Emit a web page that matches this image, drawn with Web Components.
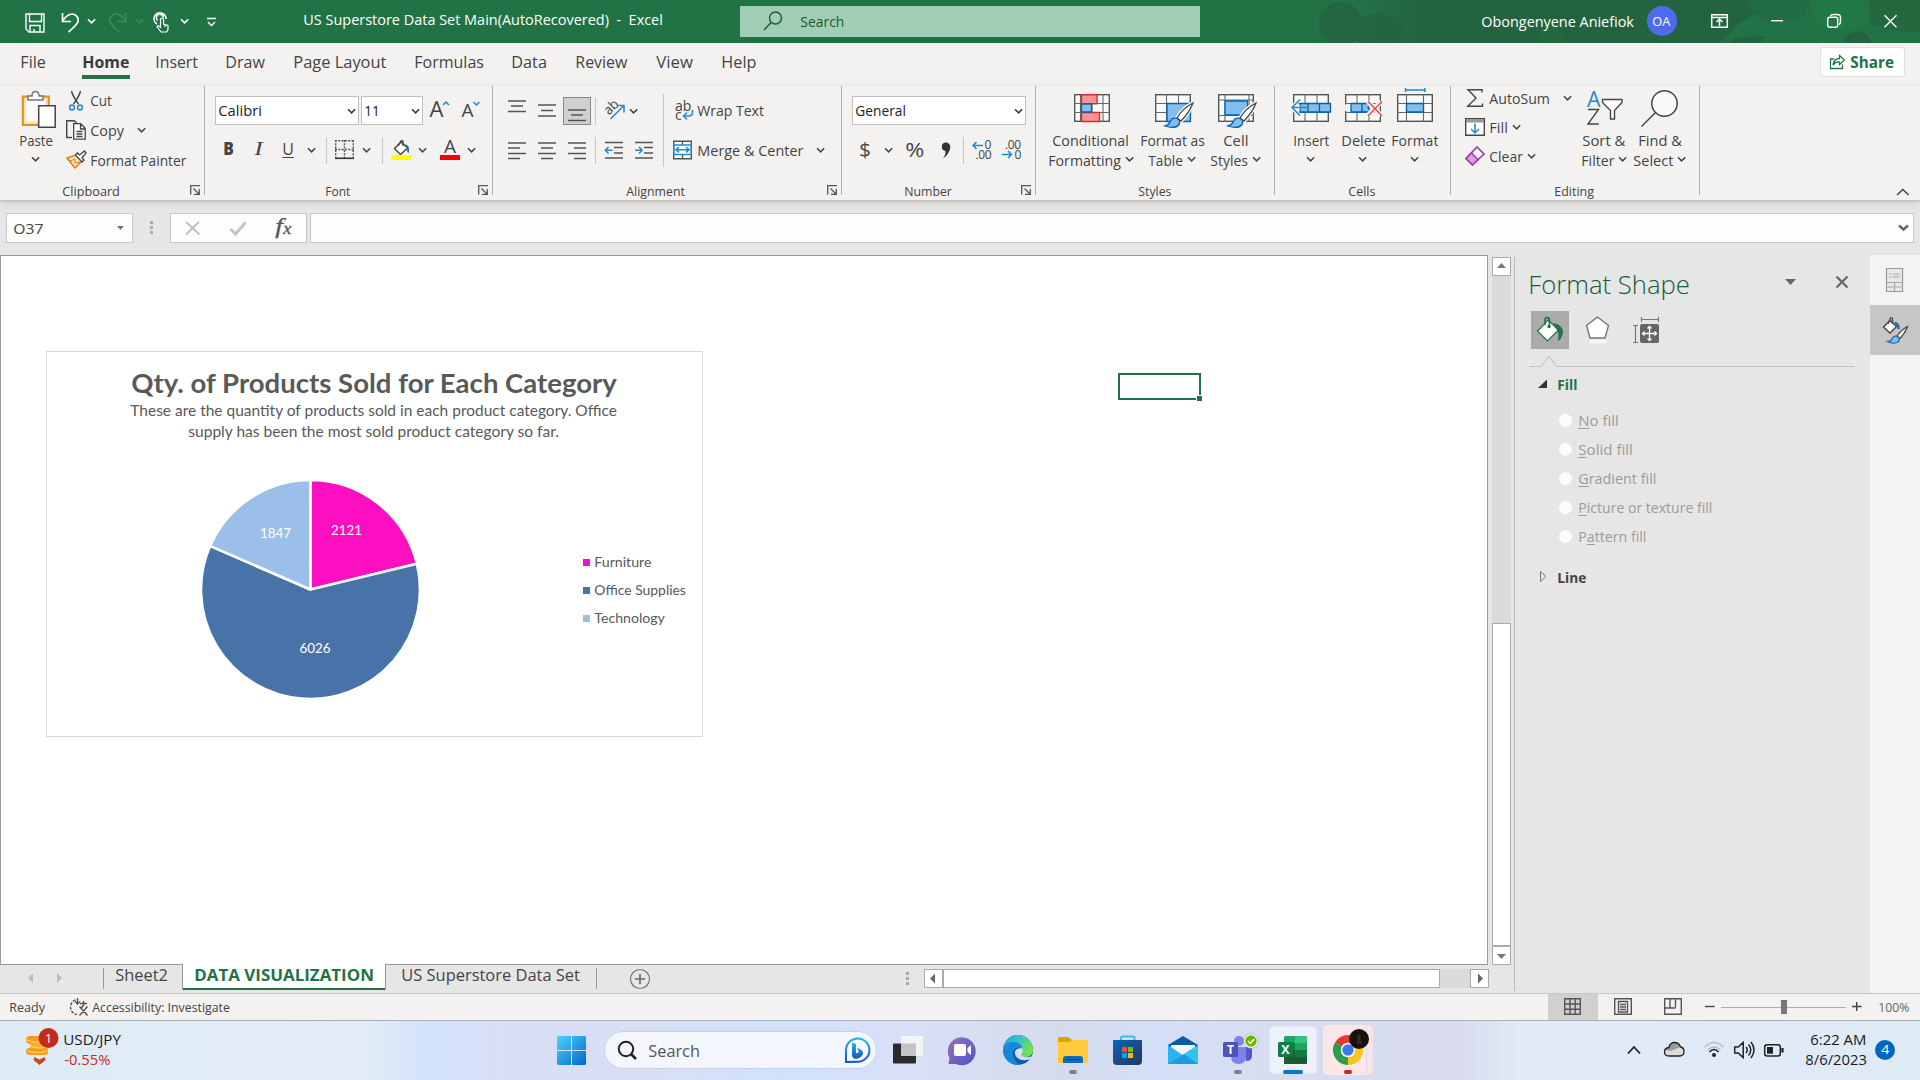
<!DOCTYPE html>
<html lang="en">
<head>
<meta charset="utf-8">
<title>US Superstore Data Set Main - Excel</title>
<style>
html,body{margin:0;padding:0;width:1920px;height:1080px;overflow:hidden;background:#e6e6e6;font-family:"Open Sans","Noto Sans",sans-serif}
</style>
</head>
<body>
<excel-desktop></excel-desktop>
<script>
/* ---------- flow layout helpers: nested flex boxes measured in page units ---------- */
const flow = (b) => {
  let cur = b.dir === 'v' ? b.y : b.x, out = '';
  for (const c of b.kids) {
    const ml = b.dir === 'v' ? c.x - b.x : c.x - cur;
    const mt = b.dir === 'v' ? c.y - cur : c.y - b.y;
    out += c.html(`margin:${+mt.toFixed(2)}px 0 0 ${+ml.toFixed(2)}px;width:${c.w}px;height:${c.h}px;`);
    cur = b.dir === 'v' ? c.y + c.h : c.x + c.w;
  }
  return out;
};
const box = (dir, x, y, w, h, kids, css = '') => {
  const b = { dir, x, y, w, h, kids };
  b.html = m => `<div class="${dir}" style="${m}${css}">${flow(b)}</div>`;
  return b;
};
const H = (...a) => box('h', ...a), V = (...a) => box('v', ...a);
const R = (x, y, w, h, css) => box('h', x, y, w, h, [], css);
const I = (x, y, w, h, inner) => ({ x, y, w, h, html: m => `<svg viewBox="${x} ${y} ${w} ${h}" style="${m}">${inner}</svg>` });
const T = (x, cy, w, text, s = 14.5, css = '') => ({ x, y: cy - 10, w, h: 20, html: m => `<fit-text style="${m}font-size:${s}px;${css}">${text}</fit-text>` });
const C = (x, cy, col = '#444', k = 3.6) => I(x, cy - 4, k * 2 + 1, 8, `<path d="M${x} ${cy - 1.7}l${k} ${k}l${k} -${k}" fill="none" stroke="${col}" stroke-width="1.5"/>`);
const E = (tag, x, y, w, h, inner = '') => ({ x, y, w, h, html: m => `<${tag} style="${m}">${inner}</${tag}>` });

const BASE = `<style>
*{box-sizing:border-box}
:host{display:block;flex:none;box-sizing:border-box}
.h,.v{display:flex;flex:none}.h{align-items:flex-start}.v{flex-direction:column}
svg,fit-text{display:block;flex:none;overflow:visible}
svg text{font-family:"Open Sans","Noto Sans",sans-serif}
</style>`;
const define = (name, css, root) => customElements.define(name, class extends HTMLElement {
  connectedCallback() {
    if (this.shadowRoot) return;
    this.attachShadow({ mode: 'open' }).innerHTML = BASE + `<style>${css}</style>` + (typeof root === 'function' ? root(this) : root.html(''));
  }
});
const sized = (b) => b.html(`width:${b.w}px;height:${b.h}px;`);

/* Label that condenses its glyphs to the width of its box */
customElements.define('fit-text', class extends HTMLElement {
  connectedCallback() {
    if (this.shadowRoot) return;
    const r = this.attachShadow({ mode: 'open' });
    r.innerHTML = `<style>:host{display:block;flex:none;line-height:20px;white-space:pre}span{display:inline-block;transform-origin:0 50%}::slotted(u){text-underline-offset:2px;text-decoration-thickness:1px}</style><span><slot></slot></span>`;
    const s = r.querySelector('span');
    const n = s.getBoundingClientRect().width, w = parseFloat(this.style.width) + .6;
    if (n && w) s.style.transform = `translateX(-.7px) scaleX(${w / n})`;
  }
});

/* ---------- title bar ---------- */
const W = 'fill="none" stroke="#fff" stroke-width="1.4"';
define('title-bar', ':host{position:relative;background:#217346;color:#fff;overflow:hidden}.bg{position:absolute;left:0;top:0}.h{position:relative}', () =>
`<svg class="bg" width="1920" height="43" viewBox="0 0 1920 43"><defs><linearGradient id="g"><stop offset="0" stop-color="#24633f" stop-opacity="0"/><stop offset=".3" stop-color="#24633f"/></linearGradient></defs>
<circle cx="1341" cy="24" r="22" fill="#246640"/><ellipse cx="1378" cy="31" rx="26" ry="17" fill="#246640"/>
<rect x="1360" width="200" height="43" fill="url(#g)"/><path d="M1432 43Q1428 20 1450 0H1765Q1758 12 1745 20Q1730 30 1720 43Z" fill="#24633f"/>
<path d="M1538 43q2-20 14-20q8 4 15 20z" fill="#23693f"/><path d="M1735 38q20-2 29-2q2 3-4 7h-30z" fill="#24633f"/>
<path d="M1765 0h-18q8 22 30 22q18-1 28-6l5-16z" fill="#226c43"/><path d="M1811 0q-2 12 7 22q14 10 34 8q18-3 17-20l-5-10z" fill="#217847"/><ellipse cx="1857" cy="44" rx="14" ry="12" fill="#24633f"/><path d="M1870 24q25 10 50 8v-32h-50z" fill="#23683f"/></svg>` +
sized(H(0, 0, 1920, 43, [
  I(25, 13, 20, 20, `<path d="M26 14h18v18h-15l-3-3zM29.5 14v7.5h12V14M30 32v-6.500h10V32M34 32v-3" ${W}/>`),
  I(60, 12, 20, 22, `<path d="M62.500 13v8.500h8.500M62.500 21C68 13 74 12.500 77 16.500C80 21 78 24 68.500 32" ${W} style="stroke-width:1.700"/>`),
  C(88, 21, '#fff'),
  I(108, 12, 20, 22, `<path d="M126 13v8.500h-8.500M126 21C120 13 114 12.500 111 16.500C108 21 110 24 119.500 32" ${W} style="stroke:#3f8b61"/>`),
  C(136, 21, '#3f8b61'),
  I(153, 12, 17, 22, `<path d="M157 24a6 6 0 1 1 9-5M157.500 20.500a3.600 3.600 0 1 1 6-3" ${W} style="stroke-width:1.600"/><path d="M160.500 28v-9q1.500-2 3 0v5l4.500 1.500v4q-1 2-1.500 2.500h-5.500l-4-5.500q1-1.500 3.500.5M165 24v3" ${W} style="stroke-width:1.200"/>`),
  C(181, 21, '#fff'),
  I(207, 16, 10, 11, `<path d="M207 18.500h9M208 22l3.500 3.500l3.500-3.500" ${W}/>`),
  T(304.500, 19.500, 359, 'US Superstore Data Set Main(AutoRecovered)  -  Excel', 14.5),
  H(740, 6, 460, 31, [
    I(763, 11, 20, 20, `<circle cx="775.500" cy="18" r="6" fill="none" stroke="#185c37" stroke-width="1.400"/><path d="M771 22.500L764 30" stroke="#185c37" stroke-width="1.500"/>`),
    T(801.500, 21.500, 43.500, 'Search', 14.5, 'color:#185c37')], 'background:#a0cdb4'),
  T(1482.500, 21.500, 152, 'Obongenyene Aniefiok'),
  H(1647, 6, 30, 30, [T(1653.500, 21, 17.500, 'OA', 13)], 'background:#4f6bed;border-radius:50%'),
  I(1711, 14, 17, 14, `<path d="M1711.700 14.700h15.600v12.600h-15.600zM1711 17.500h17M1719.500 26v-6M1716.500 22l3-3l3 3" ${W} style="stroke-width:1.500"/>`),
  I(1771, 20, 12, 2, `<path d="M1771 20.700h12" ${W}/>`),
  I(1827, 14, 14, 14, `<rect x="1827.700" y="17.200" width="10" height="10" rx="2" ${W}/><path d="M1830.500 16q.5-1.500 3-1.500h3.500q3.500 0 3.500 3v4q0 2.500-1.500 3" ${W}/>`),
  I(1884, 15, 13, 13, `<path d="M1884.500 15.300l12 12M1896.500 15.300l-12 12" ${W}/>`)
])));

/* ---------- tabs ---------- */
define('ribbon-tabs', ':host{background:#f3f2f1;color:#444}', () => sized(H(0, 43, 1920, 43, [
  T(21, 62, 25, 'File', 16),
  V(82, 52, 48, 27, [T(82.500, 62, 46.500, 'Home', 16, 'font-weight:700;color:#3b3a39'), R(82, 75, 48, 4, 'background:#217346')]),
  ...[[156, 42, 'Insert'], [226, 39, 'Draw'], [294, 92.500, 'Page Layout'], [415, 69, 'Formulas'], [512, 35, 'Data'], [576, 51.500, 'Review'], [657, 36, 'View'], [721.500, 34.500, 'Help']].map(a => T(a[0], 62, a[1], a[2], 16)),
  H(1820, 47, 85, 30, [
    I(1829, 53, 16, 17, `<path d="M1834 59h-3.500v9.500h12v-4M1833 65q1-6.500 6.500-6.500v-3l5 4.500l-5 4.500v-2.500q-4-.500-6.500 3z" fill="none" stroke="#217346" stroke-width="1.300"/>`),
    T(1850.500, 62, 43, 'Share', 16, 'font-weight:700;color:#217346')], 'background:#fff;border-radius:3px;box-shadow:inset 0 0 0 1px #e1dfdd')
])));

/* ---------- ribbon ---------- */
const K = 'fill="none" stroke="#444" stroke-width="1.4"', B = 'fill="none" stroke="#1e8bcd" stroke-width="1.5"';
const launcher = x => I(x, 185, 10, 10, `<path d="M${x + .7} 194.500v-8.800h9.300M${x + 3.500} 188.500l5.500 5.500M${x + 9.300} 189v5.300h-5.300" fill="none" stroke="#555" stroke-width="1.300"/>`);
const vs = (x, y = 137, h = 27) => R(x, y, 1, h, 'background:#c8c6c4');
const lines = (x, ys, ws, al) => I(x, ys[0] - 1, 18, 19, ys.map((y, i) => { const d = al === 'l' ? 0 : al === 'r' ? 18 - ws[i] : (18 - ws[i]) / 2; return `<path d="M${x + d} ${y}h${ws[i]}" stroke="#555" stroke-width="1.500"/>`; }).join(''));
const combo = (x, w, tw, text) => H(x, 96, w, 29, [T(x + 4, 111, tw, text, 14.5, 'color:#222'), C(x + w - 11, 111, '#333')], 'background:#fff;box-shadow:inset 0 0 0 1px #c2c0be');
const grid = (x, y, w, h, cs, rs) => `<rect x="${x + .7}" y="${y + .7}" width="${w - 1.4}" height="${h - 1.4}" fill="#fafafa" stroke="#555" stroke-width="1.400"/>` + cs.map(c => `<path d="M${x + c} ${y}v${h}" stroke="#666" stroke-width="1.100"/>`).join('') + rs.map(r => `<path d="M${x} ${y + r}h${w}" stroke="#666" stroke-width="1.100"/>`).join('');
const brush = (x, y) => `<path d="M${x + 28} ${y}q-10 5-16 15l4 3q8-8 12-18z" fill="#fff" stroke="#f3f2f1" stroke-width="4"/><path d="M${x + 28} ${y}q-10 5-16 15l4 3q8-8 12-18z" fill="#fff" stroke="#444" stroke-width="1.300"/><path d="M${x} ${y + 23}q4-1 5-4q2-5 7-3.500q4 2 2 6q-4 5-14 1.500z" fill="#83beec" stroke="#0063b1" stroke-width="1.300"/>`;
const BL = 'fill="#83beec" stroke="#0063b1" stroke-width="1.300"';
const group = (x, w, kids, label) => V(x, 86, w, 109, [H(x, 86, w - 1, 90, kids), H(x, 178, w - 1, 17, label)], 'border-right:1px solid #b3b0ad');
const L = (x, w, t) => T(x, 191, w, t, 12.7);

define('ribbon-bar', ':host{background:#f3f2f1;color:#444;box-shadow:0 1px 2px #bbb8b5,0 3px 7px #d0cecc;position:relative}', () => sized(H(0, 86, 1920, 114, [
  group(0, 205, [
    V(14, 88, 46, 80, [
      I(21, 90, 36, 38, `<path d="M22.800 96.500h26v28.500h-26z" fill="#fbe0a0" stroke="#e08a28" stroke-width="2"/><path d="M26 99h19.500v22.500h-19.500z" fill="#fafafa"/><path d="M28 100v-4h4q0-4.500 3.500-4.500t3.500 4.500h4v4z" fill="#fff" stroke="#777" stroke-width="1.500"/><path d="M38.700 105.700h16.500v21.600h-16.500z" fill="#fff" stroke="#444" stroke-width="1.500"/>`),
      T(19.500, 140.500, 33, 'Paste'), C(31.500, 159)]),
    V(66, 88, 122, 84, [
      H(66, 88, 122, 24, [I(69, 91, 14, 19, `<path d="M71.500 91q1 5 7 13M80.500 91q-1 5-7 13" fill="none" stroke="#444" stroke-width="1.400"/><circle cx="72" cy="107.500" r="2.400" ${B}/><circle cx="80" cy="107.500" r="2.400" ${B}/>`), T(90.500, 100.500, 21, 'Cut')]),
      H(66, 118, 122, 24, [I(66, 120, 20, 20, `<path d="M72 137.500h-5.300v-16.800h7.500M77.500 124l-3.500-3.500" ${K}/><path d="M73.700 123.700h7l4.500 4.500v11h-11.500zM80.500 124v5h5M76.500 131.500h6M76.500 134h6M76.500 136.500h6" fill="#fff" stroke="#444" stroke-width="1.300"/>`), T(90.500, 130.500, 33, 'Copy'), C(137.500, 130)]),
      H(66, 148, 122, 24, [I(66, 150, 20, 19, `<path d="M67 158l9-3l6 6l-7 7z" fill="#fde3bb" stroke="#e07a12" stroke-width="1.500"/><path d="M70 161l5-2v4l5-1" fill="none" stroke="#e07a12"/><path d="M75.500 155l2-2l2 2l5-4l1.500 2l-4 5l2 2l-2 2z" fill="#fff" stroke="#444" stroke-width="1.300"/>`), T(90.500, 160.500, 95.500, 'Format Painter')])])
  ], [L(62.500, 57, 'Clipboard'), launcher(190)]),
  group(205, 288, [V(215, 90, 270, 80, [
    H(215, 93, 270, 36, [combo(215, 144, 43, 'Calibri'), combo(361, 62, 15, '11'),
      I(430, 97, 20, 22, `<text x="429.500" y="116.500" font-size="22" fill="#444" textLength="14" lengthAdjust="spacingAndGlyphs">A</text><path d="M443 105l3-3l3 3" ${B}/>`),
      I(462, 97, 20, 22, `<text x="461.500" y="116.500" font-size="18.500" fill="#444" textLength="12" lengthAdjust="spacingAndGlyphs">A</text><path d="M473.500 102l3 3l3-3" ${B}/>`)]),
    H(215, 134, 270, 32, [T(224, 149, 10, 'B', 17, 'font-weight:800'), T(255, 149, 8, 'I', 18.5, 'font-style:italic;font-family:Liberation Serif,serif'), T(283, 148.500, 11, '<u>U</u>', 16), C(307.500, 150), vs(326),
      I(335, 140, 19, 19, `<path d="M335.700 140v18M344.500 140v18M353.300 140v18M335 140.700h19M335 149.500h19" fill="none" stroke="#555" stroke-width="1.400" stroke-dasharray="2 1.300"/><path d="M335 158.300h19" stroke="#333" stroke-width="1.600"/>`), C(363.500, 150), vs(382),
      I(391, 139, 20, 21, `<path d="M401 142l6.500 6l-7 6.500l-6-6z" fill="#fff" stroke="#444" stroke-width="1.400"/><path d="M398 146l3-5q2-1 2 1v4" ${K}/><path d="M405 144q5 1 4 9q-3-1-1.500-5z" fill="#1570b8"/><path d="M391 155h20v5h-20z" fill="#ff0"/>`), C(419.500, 150),
      I(440, 139, 20, 21, `<text x="444" y="153" font-size="18" fill="#444" textLength="12" lengthAdjust="spacingAndGlyphs">A</text><path d="M440 155h20v5h-20z" fill="red"/>`), C(468.500, 150)])])
  ], [L(325.500, 24.500, 'Font'), launcher(478)]),
  group(493, 349, [
    V(500, 92, 150, 78, [
      H(500, 94, 150, 36, [lines(508, [101, 106, 111.500], [18, 12, 18]), lines(538, [104.500, 110, 115.500], [18, 12, 18]),
        H(563, 97, 28, 28, [lines(568, [110, 115, 120.500], [18, 12, 18])], 'background:#d2d0ce;box-shadow:inset 0 0 0 1px #8a8886'), vs(595, 98),
        I(604, 100, 20, 20, `<text font-size="13.500" fill="#444" transform="translate(609 115.500) rotate(-45)" textLength="15" lengthAdjust="spacingAndGlyphs">ab</text><path d="M610.500 119l13-13M617 105.500h7v7" ${B}/>`), C(629.500, 111)]),
      H(500, 134, 150, 34, [lines(508, [142.500, 147.500, 153, 158], [18, 12, 18, 12], 'l'), lines(538, [142.500, 147.500, 153, 158], [18, 12, 18, 12]), lines(568, [142.500, 147.500, 153, 158], [18, 12, 18, 12], 'r'), vs(595),
        I(605, 141, 19, 19, `<path d="M605 142.500h18M614 147.500h9M614 153h9M605 158h18" stroke="#555" stroke-width="1.500"/><path d="M605.500 150.300h7M608.500 147l-3.200 3.300l3.200 3.300" ${B}/>`),
        I(635, 141, 19, 19, `<path d="M635 142.500h18M644 147.500h9M644 153h9M635 158h18" stroke="#555" stroke-width="1.500"/><path d="M635 150.300h7M639 147l3.200 3.300l-3.200 3.300" ${B}/>`)])]),
    vs(663, 94, 73),
    V(672, 92, 160, 78, [
      H(672, 96, 160, 30, [I(676, 101, 18, 20, `<text font-size="14" fill="#444"><tspan x="675" y="111">ab</tspan><tspan x="675" y="120">c</tspan></text><path d="M692.500 110q1 6-4 6h-4M687 112.500l-3.500 3.500l3.500 3.500" ${B}/>`), T(697.500, 110.500, 66, 'Wrap Text')]),
      H(672, 136, 160, 30, [I(673, 141, 19, 19, `<path d="M673.700 141.200h17.600v17.600h-17.600zM682.500 141v4M682.500 155v4" fill="#fff" stroke="#555" stroke-width="1.400"/><path d="M674 145h17v9.500h-17z" fill="#fff" stroke="#1e8bcd" stroke-width="1.400"/><path d="M676 149.700h13M679 147l-3 2.700l3 2.700M686 147l3 2.700l-3 2.700" ${B}/>`), T(697.500, 150.500, 105.500, 'Merge &amp; Center'), C(816.500, 150)])])
  ], [L(627, 58, 'Alignment'), launcher(827)]),
  group(842, 194, [V(852, 90, 180, 80, [
    H(852, 93, 180, 36, [combo(852, 174, 50, 'General')]),
    H(852, 134, 180, 34, [T(860, 149.500, 11, '$', 19.500), C(884.500, 150), T(906, 150, 18.500, '%', 20), I(940, 141, 12, 19, `<path d="M945.500 142.500a4.300 4.300 0 0 1 4.800 4.500q-.5 7-7.300 11.500q3-4.500 2.500-7.500a4.300 4.300 0 0 1 0-8.500z" fill="#333"/>`), vs(963),
      I(972, 139, 20, 21, `<text font-size="12" fill="#444"><tspan x="984.500" y="148.800">0</tspan><tspan x="975.500" y="159" letter-spacing="-.4">.00</tspan></text><path d="M973 145.500h10M976.500 142l-3.500 3.500l3.500 3.500" ${B}/>`),
      I(1002, 139, 20, 21, `<text font-size="12" fill="#444"><tspan x="1005" y="148.800" letter-spacing="-.4">.00</tspan><tspan x="1014.500" y="159">0</tspan></text><path d="M1002 154.500h9M1008 151l3.500 3.500l-3.500 3.500" ${B}/>`)])])
  ], [L(904.500, 47, 'Number'), launcher(1021)]),
  group(1036, 239, [
    V(1046, 88, 90, 84, [I(1074, 94, 36, 28, grid(1074, 94, 36, 28, [6.500, 18, 29], [9.500, 18.500]) + `<path d="M1081.500 94.700h15.500v9h-15.500zM1081.500 112.500h18v9h-18z" fill="#ff9393" stroke="#d92c2c" stroke-width="1.400"/><path d="M1081.500 104h10v8h-10z" ${BL}/>`),
      T(1053, 140.500, 76, 'Conditional'), H(1046, 151, 90, 20, [T(1048.500, 160.500, 72, 'Formatting'), C(1125.500, 159)])]),
    V(1138, 88, 68, 84, [I(1155, 94, 38, 34, grid(1155, 94, 36, 28, [11.500, 23.500], [9.500, 18.500]) + `<path d="M1167 103.500h23.500v18h-23.500z" ${BL}/>` + brush(1165, 103)),
      T(1140.500, 140.500, 64, 'Format as'), H(1138, 151, 68, 20, [T(1148.500, 160.500, 34, 'Table'), C(1187.500, 159)])]),
    V(1208, 88, 56, 84, [I(1218, 94, 38, 34, grid(1218, 94, 36, 28, [7, 31], [6, 21.500]) + `<path d="M1225 101h22.500v14h-22.500z" ${BL}/>` + brush(1228, 103)),
      T(1224, 140.500, 24.500, 'Cell'), H(1208, 151, 56, 20, [T(1210.500, 160.500, 37, 'Styles'), C(1252.500, 159)])])
  ], [L(1138.500, 32.500, 'Styles')]),
  group(1275, 176, [
    V(1288, 86, 44, 84, [I(1291, 94, 40, 28, grid(1293, 94, 36, 28, [12, 24], [9.500, 18.500]) + `<path d="M1300 103.500h30.500v8.500h-30.500zM1308 103.500v8.500M1319.500 103.500v8.500" ${BL}/><path d="M1292 107.500h8M1300 99l-8 8.500l8 8.500" fill="none" stroke="#f3f2f1" stroke-width="4"/><path d="M1308 107.500h-15M1300 99.500l-8 8l8 8" ${B}/>`),
      T(1293.500, 140.500, 35.500, 'Insert'), C(1306.500, 159)]),
    V(1340, 86, 46, 84, [I(1345, 94, 38, 28, grid(1345, 94, 36, 28, [12, 24], [9.500, 18.500]) + `<path d="M1344 104.500h10v6.500h-10z" fill="#f3f2f1"/><path d="M1351 103.500h20l-3 4l3 4.500h-20zM1362 103.500v8.500" ${BL}/><path d="M1368 101.500l13 14M1381 101.500l-13 14" stroke="#f3f2f1" stroke-width="5"/><path d="M1368 101.500l14 14.500M1382 101.500l-14 14.500" stroke="#f04a45" stroke-width="1.500"/>`),
      T(1341.500, 140.500, 43.500, 'Delete'), C(1358.500, 159)]),
    V(1390, 86, 50, 84, [I(1397, 87, 36, 35, grid(1397, 94, 36, 28, [9.500, 26.500], [9.500, 18.500]) + `<path d="M1406.500 103.500h17v8.500h-17z" ${BL}/><path d="M1406 90h18.500M1405.500 88v4M1424.800 88v4" ${B}/>`),
      T(1391.500, 140.500, 46.500, 'Format'), C(1410.500, 159)])
  ], [L(1348.500, 26.500, 'Cells')]),
  group(1451, 249, [
    V(1464, 86, 110, 82, [
      H(1464, 87, 110, 24, [I(1467, 89, 16, 18, `<path d="M1482 92.500v-2.800h-14l8 8.300l-8.300 8.300h14.800v-2.800" ${K}/>`), T(1489.500, 98.500, 60, 'AutoSum'), C(1563.500, 98)]),
      H(1464, 116, 110, 24, [I(1465, 118, 20, 18, `<path d="M1465.700 118.700h18.600v16.600h-18.600z" fill="#fff" stroke="#444" stroke-width="1.400"/><path d="M1466 119.500h18v3h-18z" fill="#999"/><path d="M1475 123.500v9M1471 129l4 4l4-4" ${B}/>`), T(1489.500, 127.500, 18, 'Fill'), C(1512.500, 126.500)]),
      H(1464, 144, 110, 24, [I(1465, 146, 20, 20, `<path d="M1477 147l7 7l-11.500 11l-6.500-6.500z" fill="#fff" stroke="#9b36a8" stroke-width="1.600"/><path d="M1471.500 153l6.500 6.500l-5.500 5.500l-6.500-6.500z" fill="#dd9ee0" stroke="#9b36a8" stroke-width="1.400"/>`), T(1489.500, 156.500, 33, 'Clear'), C(1527.500, 155.500)])]),
    V(1578, 86, 50, 86, [I(1587, 90, 37, 36, `<text x="1587" y="106.500" font-size="21" fill="#1e8bcd" textLength="13.500" lengthAdjust="spacingAndGlyphs">A</text><path d="M1588 109.500h10.500l-10.500 14.500h10.700" ${K}/><path d="M1602.500 99.500h19.500v3l-7.500 8v8.500h-4v-8.500l-8-8z" fill="#fff" stroke="#444" stroke-width="1.400"/>`),
      T(1583, 140.500, 42.500, 'Sort &amp;'), H(1578, 151, 50, 20, [T(1581.500, 160.500, 32.500, 'Filter'), C(1618.500, 159)])]),
    V(1630, 86, 58, 86, [I(1641, 90, 37, 37, `<circle cx="1664.500" cy="103.500" r="12.700" fill="#fafafa" stroke="#444" stroke-width="1.500"/><path d="M1655.500 112.500L1641.500 126.500" ${K}/>`),
      T(1638.500, 140.500, 43, 'Find &amp;'), H(1630, 151, 58, 20, [T(1633.500, 160.500, 39.500, 'Select'), C(1677.500, 159)])])
  ], [L(1554.500, 39, 'Editing')]),
  I(1896, 187, 14, 10, `<path d="M1897 195l5.800-5.500l5.800 5.500" fill="none" stroke="#444" stroke-width="1.500"/>`)
])));

/* ---------- formula bar ---------- */
const fb = 'background:#fdfdfd;box-shadow:inset 0 0 0 1px #c6c6c6';
define('formula-bar', ':host{color:#444}', () => sized(H(0, 200, 1920, 55, [
  H(6, 213, 127, 30, [T(13.500, 228.500, 29.500, 'O37', 14.5), I(117, 225, 8, 5, `<path d="M117 226h7l-3.500 4z" fill="#777"/>`)], fb),
  I(150, 220, 4, 15, `<path d="M151.500 221v3m0 2v3m0 2v3" stroke="#aaa" stroke-width="3"/>`),
  H(170, 213, 137, 30, [
    I(185, 221, 16, 15, `<path d="M186 222l13.500 12.500M199 222l-13 12.500" stroke="#c0c0c0" stroke-width="2"/>`),
    I(230, 221, 17, 15, `<path d="M230.500 229l5 5l10-11.500" fill="none" stroke="#c4c4c4" stroke-width="3"/>`),
    T(276, 226, 7, 'f', 20, 'font-family:Liberation Serif,serif;font-style:italic;color:#555;-webkit-text-stroke:.3px #555'), T(283.500, 229, 7.500, 'x', 16, 'font-family:Liberation Serif,serif;font-style:italic;color:#555;-webkit-text-stroke:.3px #555')], fb),
  H(310, 213, 1604, 30, [I(1898, 224, 11, 8, `<path d="M1899 225.500l4.500 4l4.500-4" fill="none" stroke="#666" stroke-width="2.600"/>`)], fb)
])));

/* ---------- chart ---------- */
const pt = a => { const r = a * Math.PI / 180; return `${310.5 + 109.5 * Math.sin(r)} ${589.5 - 109.5 * Math.cos(r)}`; };
const slice = (a, b, c) => `<path d="M310.500 589.500L${pt(a)}A109.500 109.500 0 ${b - a > 180 ? 1 : 0} 1 ${pt(b)}Z" fill="${c}" stroke="#fff" stroke-width="2.600" stroke-linejoin="round"/>`;
const LF = 'font-family:Lato,sans-serif;color:#595959;';
const leg = (y, w, t, c) => H(583, y - 10, 105, 20, [R(583, y - 3, 7, 7, 'background:' + c), T(594.500, y, w, t, 12.7, LF)]);
define('pie-chart', ':host{background:#fff;border:1px solid #d9d9d9}', () => {
  const nums = [[331, 530, '2121'], [260, 533.5, '1847'], [299.5, 648.5, '6026']].map(n => `<text x="${n[0]}" y="${n[1] + 4.500}" font-size="12.700" style="font-family:Lato,sans-serif" fill="#fff" textLength="31" lengthAdjust="spacingAndGlyphs">${n[2]}</text>`).join('');
  return sized(V(47, 352, 654, 383, [
    T(131.500, 382.500, 485, 'Qty. of Products Sold for Each Category', 26.5, LF + 'font-weight:700'),
    T(131, 409.500, 486, 'These are the quantity of products sold in each product category. Office', 15.3, LF),
    T(189, 430.500, 370, 'supply has been the most sold product category so far.', 15.3, LF),
    H(201, 480, 490, 220, [I(201, 480, 219, 219, slice(0, 76.4, '#fb0fc0') + slice(76.4, 293.47, '#4873a9') + slice(293.47, 360, '#9bbfe9') + nums),
      V(583, 550, 105, 80, [leg(561.500, 56.500, 'Furniture', '#fb0fc0'), leg(589.500, 91, 'Office Supplies', '#4873a9'), leg(617.500, 70, 'Technology', '#9bbfe9')])])
  ]));
});

/* ---------- worksheet canvas: the chart flows, the cell cursor floats on the grid ---------- */
define('sheet-view', `:host{position:relative;background:#fff;border:1px solid #999}
.cursor{position:absolute;left:1117px;top:117px;width:83px;height:27px;border:2px solid #217346}
.cursor i{position:absolute;right:-3px;bottom:-3px;width:6px;height:6px;background:#217346;border:1px solid #fff;border-width:1px 0 0 1px}`, () =>
  sized(V(1, 256, 1486, 708, [E('pie-chart', 46, 351, 657, 386)])) + '<div class="cursor"><i></i></div>');

const sb = 'background:#fff;box-shadow:inset 0 0 0 1px #ababab';
define('scroll-bar', '', el => el.getRootNode().host.localName === 'sheet-tabs' ?
  sized(H(924, 969, 565, 19, [H(924, 969, 19, 19, [I(930, 973, 6, 10, '<path d="M935 973.500v10l-5-5z" fill="#666"/>')], sb), R(943, 969, 497, 19, sb), H(1470, 969, 19, 19, [I(1478, 973, 6, 10, '<path d="M1478 973.500v10l5-5z" fill="#666"/>')], sb)], 'background:#dadada')) :
  sized(V(1492, 257, 19, 708, [V(1492, 257, 19, 19, [I(1497, 263, 10, 5, '<path d="M1497 268h9l-4.500-5z" fill="#777"/>')], sb), R(1492, 623, 19, 323, sb), V(1492, 946, 19, 19, [I(1497, 953, 10, 5, '<path d="M1497 954h9l-4.500 5z" fill="#777"/>')], sb)], 'background:#dadada')));

/* ---------- sheet tabs ---------- */
define('sheet-tabs', ':host{color:#444;position:relative}', () => sized(H(0, 964, 1513, 29, [
  I(28, 973, 6, 10, '<path d="M33 973v10l-5-5z" fill="#bdbdbd"/>'), I(57, 973, 6, 10, '<path d="M57 973v10l5-5z" fill="#bdbdbd"/>'),
  R(103, 968, 1, 21, 'background:#999'), T(116, 974.500, 52, 'Sheet2', 16),
  V(182, 964, 204, 26, [T(194, 974.500, 179, 'DATA VISUALIZATION', 16, 'font-weight:700;color:#217346')], 'background:#fff;border:solid #999;border-width:0 1px;box-shadow:inset 0 -2px #217346'),
  T(402, 974.500, 178, 'US Superstore Data Set', 16), R(596, 968, 1, 21, 'background:#999'),
  I(629, 968, 22, 22, '<circle cx="640" cy="979" r="9.500" fill="none" stroke="#777" stroke-width="1.200"/><path d="M635 979h10M640 974v10" stroke="#666" stroke-width="1.600"/>'),
  I(906, 971, 3, 15, '<path d="M907.500 972v3m0 2v3m0 2v3" stroke="#aaa" stroke-width="3"/>'),
  E('scroll-bar', 924, 969, 565, 19)
])));

/* ---------- format pane ---------- */
const opt = (y, w, t) => H(1559, y - 11, 200, 22, [R(1559, y - 7, 13, 13, 'border-radius:50%;background:#fcfcfc'), T(1579, y, w, t, 14.5, 'color:#9c9c9c')]);
define('format-pane', ':host{border-left:1px solid #bdbdbd}', () => sized(V(1515, 257, 355, 735, [
  H(1515, 266, 350, 38, [T(1529, 283.500, 161, 'Format Shape', 25.5, 'font-weight:300;color:#185c37'), I(1785, 279, 11, 6, '<path d="M1785 279h11l-5.500 6z" fill="#666"/>'), I(1836, 276, 12, 12, '<path d="M1836.500 276.500l11 11M1847.500 276.500l-11 11" stroke="#666" stroke-width="2.200"/>')]),
  H(1515, 311, 350, 38, [
    H(1531, 311, 38, 38, [I(1537, 317, 27, 26, '<path d="M1548 320l10.500 10l-11 11l-10-10z" fill="#fff" stroke="#217346" stroke-width="1.200"/><path d="M1545 325v-5q0-2.500 2.200-2.500t2.200 2.500v6" fill="none" stroke="#217346" stroke-width="1.600"/><circle cx="1549" cy="326.500" r="1.700" fill="#217346"/><path d="M1553 323q10 2 10 9q-1 7-5 9q1-5 0-9.500z" fill="#217346"/>')], 'background:#ababab'),
    I(1585, 316, 25, 29, '<path d="M1597.500 317l11 8.500l-3.500 12.500h-15l-3.500-12.500z" fill="#fff" stroke="#777" stroke-width="1.400"/><path d="M1590 339.500h15.500l1 4h-17.500z" fill="#f5f5f5"/>'),
    I(1633, 317, 26, 26, '<rect x="1640" y="324" width="19" height="19" rx="2" fill="#666"/><path d="M1649.500 326.500v14M1642.500 333.500h14M1647.500 328.500l2-2l2 2M1647.500 338.500l2 2l2-2M1644.500 331.500l-2 2l2 2M1654.500 331.500l2 2l-2 2" fill="none" stroke="#fff" stroke-width="1.300"/><path d="M1641.500 317v5M1658.500 317v5M1641.500 319.500h17M1633 325.500h5M1633 342.500h5M1635.500 325.500v17" stroke="#777" stroke-width="1.200"/>')]),
  I(1529, 355, 326, 12, '<path d="M1529 366.500h12l8-10l8 10h298" fill="none" stroke="#c4c4c4" stroke-width="1.200"/>'),
  H(1515, 374, 350, 22, [I(1538, 380, 9, 9, '<path d="M1547 379.500v8.500h-9z" fill="#333"/>'), T(1557.500, 384.500, 19.500, 'Fill', 14.5, 'font-weight:700;color:#217346')]),
  opt(420.500, 40, '<u>N</u>o fill'), opt(449.500, 54, '<u>S</u>olid fill'), opt(478.500, 77.500, '<u>G</u>radient fill'), opt(507.500, 133.500, '<u>P</u>icture or texture fill'), opt(536.500, 67.500, 'P<u>a</u>ttern fill'),
  H(1515, 567, 350, 22, [I(1540, 571, 7, 12, '<path d="M1540.500 571.500v10l5.300-5z" fill="none" stroke="#777"/>'), T(1557.500, 577.500, 28.500, 'Line', 14.5, 'font-weight:700;color:#444')])
])));
define('pane-switcher', ':host{background:#f3f3f3}', () => sized(V(1870, 255, 50, 737, [
  V(1870, 255, 50, 50, [I(1886, 268, 17, 24, '<path d="M1886.500 268.500h16v23h-16z" fill="#e8e8e8" stroke="#999" stroke-width="1.200"/><path d="M1889 274h2m1.500 0h7M1889 277h2m1.500 0h7M1886.500 282.500h16M1886.500 287h16M1894.500 282v9" stroke="#aaa" stroke-width="1.200"/>')]),
  V(1870, 305, 50, 50, [I(1883, 317, 26, 27, '<path d="M1890 320.500l6.500 6l-6.500 6.500l-6.500-6z" fill="#fff" stroke="#444" stroke-width="1.400"/><path d="M1888 324l2.500-6q2-1 2 1v5" fill="none" stroke="#444" stroke-width="1.300"/><path d="M1894.500 323q4.500.5 4 6" fill="none" stroke="#1e6fb8" stroke-width="2.500"/><path d="M1907.500 326.500q-6 3-10.500 9.500l3 2.500q5-5 7.500-12z" fill="#fff" stroke="#444" stroke-width="1.300"/><path d="M1887.500 341.500q4 0 5-3.500q3-3.500 6-.5q2 3-1.500 5q-5 1.500-9.500-1z" fill="#83beec" stroke="#1e6fb8" stroke-width="1.300"/>')], 'background:#c6c6c6')
])));

/* ---------- status bar ---------- */
const S = 'fill="none" stroke="#555" stroke-width="1.400"';
define('status-bar', ':host{background:#f3f2f1;border-top:1px solid #c8c6c4;color:#444}', () => sized(H(0, 994, 1920, 26, [
  T(9.500, 1007.500, 35, 'Ready', 12.2),
  I(69, 999, 19, 17, `<path d="M75.500 1000a7.500 7.500 0 0 0 1.500 14.500" ${S} stroke-dasharray="3 1.300"/><path d="M77.500 998v5M75 1001.500l2.500 2.500l2.500-2.500M80 1003.500h7M83.500 1001v4l-2 3M79.500 1006.500l8 9M87.500 1006.500l-8 9" ${S}/>`),
  T(92.500, 1007.500, 137, 'Accessibility: Investigate', 12.2),
  H(1548, 994, 50, 26, [I(1564, 998, 17, 17, `<path d="M1564.700 998.700h15.600v15.600h-15.600zM1570 998.500v16M1575.200 998.500v16M1564.500 1004h16M1564.500 1009.200h16" ${S}/>`)], 'background:#d2d0ce'),
  I(1614, 998, 18, 17, `<path d="M1614.700 998.700h16.600v15.600h-16.600zM1618.500 1001.500h9v10.500h-9zM1620 1004.500h6M1620 1007h6M1620 1009.500h6" ${S}/>`),
  I(1664, 998, 18, 17, `<path d="M1664.700 998.700h16.600v15.600h-16.600zM1670 998.500v9M1675.500 998.500v9M1664.500 1008h11" ${S}/>`),
  I(1705, 1001, 10, 10, '<path d="M1705 1006.500h9.500" stroke="#444" stroke-width="1.400"/>'),
  H(1721, 1000, 125, 14, [R(1721, 1007, 60, 1, 'background:#b0aeac'), R(1781, 1000, 6, 14, 'background:#777'), R(1787, 1007, 59, 1, 'background:#b0aeac')]),
  I(1852, 1001, 10, 11, '<path d="M1852 1006.500h9.500M1856.700 1002v9" stroke="#444" stroke-width="1.400"/>'),
  T(1879, 1007.500, 30.500, '100%', 12.2, 'color:#666')
])));

/* ---------- Windows taskbar ---------- */
const D = 'fill="none" stroke="#222" stroke-width="1.500"';
define('task-bar', `:host{border-top:1px solid #a8b1bd;background:linear-gradient(90deg,#deebf5 0,#e2edf7 360px,#d3e2fa 430px,#d8def5 510px,#d8dff4 650px,#d0e2fa 780px,#d8e0f7 900px,#d6dbec 1060px,#d3dff6 1150px,#d7ddef 1270px,#d8dcec 1460px,#e0ebf6 1520px,#dfeaf7 1920px);color:#1b1b1b}`, () => sized(H(0, 1021, 1920, 59, [
  I(26, 1028, 33, 38, '<g fill="#f29b1e"><rect x="26" y="1036" width="20" height="8" rx="4"/><rect x="30" y="1042" width="19" height="8" rx="4" fill="#f7ad35"/><rect x="26" y="1048" width="22" height="7" rx="3.500"/></g><path d="M26 1040q10 4 20 0M30 1046q9 4 19 0M27 1051q10 3 20 0" fill="none" stroke="#ffc65c" stroke-width="1.500"/><path d="M34.500 1057l5 2.500l5-2.500l1 3l-6 5l-6-5z" fill="#c74a17"/><circle cx="48.500" cy="1038" r="10" fill="#c42b1c"/><text x="48.500" y="1042.500" font-size="12.500" text-anchor="middle" fill="#fff">1</text>'),
  V(64, 1026, 70, 50, [T(64, 1039.500, 57, 'USD/JPY', 14.5), T(64.500, 1059.500, 45.500, '-0.55%', 14.5, 'color:#c42b1c')]),
  I(557, 1036, 29, 29, '<defs><linearGradient id="w" x1="557" y1="1036" x2="586" y2="1065" gradientUnits="userSpaceOnUse"><stop stop-color="#4fd3ff"/><stop offset="1" stop-color="#0067c8"/></linearGradient></defs><path d="M558 1036h13v14h-14v-13zM572 1036h13l1 1v13h-14zM557 1051h14v14h-13l-1-1zM572 1051h14v13l-1 1h-13z" fill="url(#w)"/>'),
  H(604, 1031, 273, 38, [
    I(617, 1041, 20, 20, '<circle cx="626" cy="1049" r="7.200" fill="none" stroke="#222" stroke-width="2"/><path d="M631 1054l5 5" stroke="#222" stroke-width="2.600"/>'),
    T(649, 1050.500, 51, 'Search', 16, 'color:#555'),
    I(844, 1037, 27, 27, '<defs><linearGradient id="b" x1="0" y1="0" x2="0" y2="1"><stop stop-color="#24b5ea"/><stop offset="1" stop-color="#1a4fc4"/></linearGradient></defs><path d="M846 1062v-12a11.700 11.700 0 1 1 11.700 11.800z" fill="#f4f8ff" stroke="url(#b)" stroke-width="2"/><path d="M852 1042.500l4 1.500v9.500l3-1.500l-2-4q6 2 6 5q0 4-7 6q-4-1-4-4z" fill="url(#b)"/>')
  ], 'background:#f3f6fd;border-radius:19px;box-shadow:inset 0 0 0 1px #c6cfe6'),
  I(893, 1036, 30, 28, '<rect x="893" y="1043.500" width="23" height="20" rx="1" fill="#2a2a2a"/><rect x="901" y="1036" width="22" height="20" fill="#f5f5f5" opacity=".93"/><path d="M901 1043.500h15v12.500h-15z" fill="#c4c4c4"/>'),
  I(948, 1036, 29, 29, '<defs><linearGradient id="c" x1="0" y1="0" x2="1" y2="1"><stop stop-color="#9874be"/><stop offset="1" stop-color="#4f52c8"/></linearGradient></defs><path d="M948.500 1064l1-6a14 14 0 1 1 6.500 6z" fill="url(#c)"/><rect x="954" y="1044" width="12" height="12" rx="2" fill="#fff"/><path d="M967.500 1048l3.500-3v10l-3.500-3z" fill="#fff"/>'),
  I(1003, 1035, 30, 30, '<defs><linearGradient id="e" x1="0" y1="0" x2="1" y2=".4"><stop stop-color="#1aa5dc"/><stop offset=".5" stop-color="#35c1d0"/><stop offset="1" stop-color="#72e052"/></linearGradient></defs><circle cx="1018" cy="1050" r="15" fill="#0d5cab"/><path d="M1003 1050a15 15 0 0 1 30 0q0 6-6 7q-7 0-7-3q2-3-1-7q-5-4-11-1q-4 2-5 6z" fill="url(#e)"/><path d="M1003 1051q1-9 10-9q8 0 9 6q-8-2-9 5q0 8 7 11.800a15 15 0 0 1-17-13.800z" fill="#1785d8"/><path d="M1022 1048.500q2 3-1 6q3 4 11 2l-1 2q-5 3-11 1q-6-3-5-8q2-4 6-3z" fill="#d5def5"/>'),
  I(1058, 1036, 30, 38, '<path d="M1058 1038q0-1 1-1h9l4 3v5h-14z" fill="#e1a100"/><path d="M1058 1042h11l4-2h14q1 0 1 1v21q0 1-1 1h-28q-1 0-1-1z" fill="#fdcb3c"/><path d="M1063 1063v-4q0-3 3-3h14q3 0 3 3v4z" fill="#0f6cbd"/><path d="M1066 1059.500h14" stroke="#0a3f78"/><rect x="1069" y="1070" width="8" height="4" rx="2" fill="#7c8088"/>'),
  I(1113, 1035, 29, 30, '<defs><linearGradient id="s" x1="0" y1="0" x2="1" y2="1"><stop stop-color="#0a64b8"/><stop offset="1" stop-color="#27365c"/></linearGradient></defs><path d="M1121 1042v-4q0-1.500 1.500-1.500h10.500q1.500 0 1.500 1.500v4" fill="none" stroke="#36bdf4" stroke-width="2"/><path d="M1113 1040h29v21q0 4-4 4h-21q-4 0-4-4z" fill="url(#s)"/><path d="M1122 1047h5v5h-5z" fill="#f25022"/><path d="M1128 1047h5v5h-5z" fill="#7fba00"/><path d="M1122 1053h5v5h-5z" fill="#00a4ef"/><path d="M1128 1053h5v5h-5z" fill="#ffb900"/>'),
  I(1168, 1036, 30, 28, '<path d="M1168 1045l15-9l15 9v4h-30z" fill="#0c59a4"/><path d="M1171 1045h24v6l-12 6l-12-6z" fill="#f5f5f5"/><path d="M1168 1045l16 11l14 8h-30z" fill="#2bb3ee"/><path d="M1198 1045l-30 19h30z" fill="#31c4f3"/><path d="M1184 1054l14 10h-30z" fill="#1c9be0"/>'),
  I(1223, 1034, 36, 40, '<circle cx="1239" cy="1041" r="5" fill="#7b83eb"/><path d="M1244 1047h8v9q0 5-6 5z" fill="#5059c9"/><path d="M1231 1047h15v9q0 8-7.500 8q-7.500 0-7.500-8z" fill="#7b83eb"/><rect x="1223" y="1042" width="15" height="15" rx="1.500" fill="#4b53bc"/><text x="1230.500" y="1054" font-size="12" font-weight="700" fill="#fff" text-anchor="middle">T</text><circle cx="1251" cy="1041" r="6.500" fill="#6bb700" stroke="#fff" stroke-width="1.500"/><circle cx="1251" cy="1041" r="7.300" fill="none" stroke="#888" stroke-width=".5"/><path d="M1248 1041l2.300 2.300l4-4.300" fill="none" stroke="#fff" stroke-width="1.700"/><rect x="1234" y="1070" width="8" height="4" rx="2" fill="#7c8088"/>'),
  H(1269, 1026, 48, 48, [I(1278, 1036, 29, 38, '<rect x="1284" y="1036" width="23" height="28" rx="1.500" fill="#21a366"/><path d="M1295 1036h11q1 0 1 1v6h-12z" fill="#33c481"/><path d="M1284 1043h11v7h-11z" fill="#107c41"/><path d="M1295 1050h12v7h-12z" fill="#107c41"/><path d="M1284 1050h11v7h12v6q0 1-1 1h-21q-1 0-1-1z" fill="#185c37"/><rect x="1278" y="1042" width="15" height="15" rx="1.500" fill="#107c41"/><text x="1285.500" y="1054" font-size="12.500" font-weight="700" fill="#fff" text-anchor="middle">X</text><rect x="1283" y="1070" width="20" height="4" rx="2" fill="#0078d4"/>')], 'background:#ecf1fb;border-radius:5px;box-shadow:inset 0 0 0 1px #dfe5f2'),
  H(1323, 1025, 50, 50, [H(1323, 1025, 44, 50, [I(1333, 1029, 36, 45, '<path d="M1348 1050L1335 1042.500a15 15 0 0 1 26 0z" fill="#e33b2e"/><path d="M1348 1050L1335 1042.500a15 15 0 0 0 13 22.500l7-11z" fill="#2d9e4a"/><path d="M1348 1050l13-7.500a15 15 0 0 1-13 22.500z" fill="#fcc31e"/><path d="M1348 1050l-6.500 3.800l-6.500-11.300z" fill="#2d9e4a"/><path d="M1348 1043h13.500l-1-2h-14z" fill="#e33b2e"/><circle cx="1348" cy="1050" r="7.300" fill="#fff"/><circle cx="1348" cy="1050" r="5.700" fill="#3879ec"/><circle cx="1359" cy="1039" r="10" fill="#17100c"/><path d="M1357.500 1035q1.500-2 3 0v4l1.500 5h-5l.5-4z" fill="#3d261c"/><rect x="1344" y="1070" width="8" height="4" rx="2" fill="#c42b1c"/>')], 'background:#fde6e8;border-radius:5px;border-right:1px solid #d8dce8')], 'background:#f9e3e7;border-radius:5px'),
  I(1627, 1044, 15, 10, `<path d="M1628 1053.500l6-6.500l6 6.500" ${D} style="stroke-width:1.800"/>`),
  I(1664, 1042, 20, 15, '<path d="M1669 1056q-4.500 0-4.500-4t4.500-4.500q1-5 5.500-5t6 4.500q3.500.5 3.500 4.500t-4 4.500z" fill="#ddd"/><path d="M1665 1050q1-3 4-2.500q1-5 5.500-5t6 4.500l-10 4z" fill="#999"/><path d="M1669 1056q-4.500 0-4.500-4t4.500-4.500q1-5 5.500-5t6 4.500q3.500.5 3.500 4.500t-4 4.500z" fill="none" stroke="#222" stroke-width="1.300"/>'),
  I(1704, 1041, 20, 16, '<path d="M1704.500 1047q9.500-9 19 0M1707.500 1050q6.500-6 13 0" fill="none" stroke="#b4bcc6" stroke-width="1.400"/><path d="M1709.500 1052q4.500-5 9 0" fill="none" stroke="#222" stroke-width="1.600"/><circle cx="1714" cy="1055" r="2" fill="#222"/>'),
  I(1734, 1041, 20, 18, `<path d="M1734.700 1047h3.500l5-4.500v15l-5-4.500h-3.500zM1746 1047q2.500 3 0 6M1748.500 1044.500q4.500 5.500 0 11M1751 1042q6 8 0 16" ${D}/>`),
  I(1764, 1044, 20, 13, `<rect x="1764.700" y="1044.700" width="15.600" height="11.200" rx="2.500" ${D}/><rect x="1767" y="1047" width="6" height="6.700" fill="#222"/><path d="M1782.500 1048v4.500" stroke="#222" stroke-width="2.200"/>`),
  V(1804, 1026, 64, 50, [T(1811, 1039.500, 55.500, '6:22 AM', 14.5), T(1805.500, 1059.500, 61, '8/6/2023', 14.5)]),
  H(1875, 1040, 20, 20, [T(1882, 1049.500, 7.500, '4', 12.5, 'color:#fff')], 'background:#0067c0;border-radius:50%')
])));

/* ---------- desktop ---------- */
define('excel-desktop', ':host{width:1920px;height:1080px;background:#e6e6e6;overflow:hidden}', () => sized(V(0, 0, 1920, 1080, [
  E('title-bar', 0, 0, 1920, 43), E('ribbon-tabs', 0, 43, 1920, 43), E('ribbon-bar', 0, 86, 1920, 114), E('formula-bar', 0, 200, 1920, 55),
  H(0, 255, 1920, 738, [
    V(0, 255, 1513, 738, [H(0, 255, 1513, 710, [E('sheet-view', 0, 255, 1488, 710), E('scroll-bar', 1492, 257, 19, 708)]), E('sheet-tabs', 0, 964, 1513, 29)]),
    E('format-pane', 1514, 257, 356, 734), E('pane-switcher', 1870, 255, 50, 738)]),
  E('status-bar', 0, 993, 1920, 27), E('task-bar', 0, 1020, 1920, 60)
])));
</script>
</body>
</html>
